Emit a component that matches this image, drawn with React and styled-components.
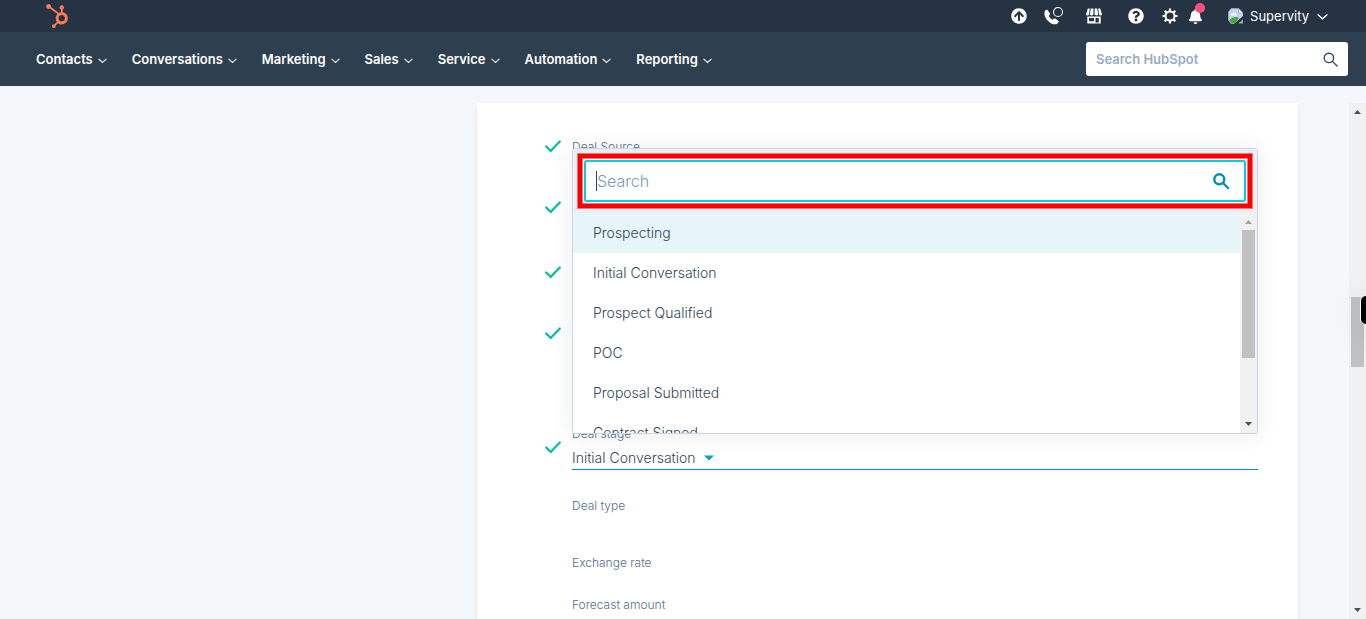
import React from 'react'
import { useState } from 'react'
import styled, { createGlobalStyle } from 'styled-components'
import { FaArrowCircleUp, FaBell, FaHubspot, FaQuestionCircle } from 'react-icons/fa'

const GlobalStyle = createGlobalStyle`
  * {
    box-sizing: border-box;
  }
  body {
    margin: 0;
    background: #f5f8fa;
    color: #33475b;
    font-family: Inter, "Open Sans", sans-serif;
    font-size: 14px;
    font-weight: 300;
  }
  button, input {
    font: inherit;
    color: inherit;
    border: none;
    background: none;
    padding: 0;
  }
  button {
    cursor: pointer;
  }
  svg {
    display: block;
    flex: none;
  }
`;

const Page = styled.div`
  height: 100vh;
  display: flex;
  flex-direction: column;
  overflow: hidden;
`;

const TopBar = styled.header`
  flex: none;
  height: 32px;
  padding: 0 38px 0 45px;
  display: flex;
  align-items: center;
  justify-content: space-between;
  background: #253342;
  color: #fff;
`;

const Logo = styled.a`
  color: #ff7a59;
`;

const Tools = styled.div`
  display: flex;
  align-items: center;
  gap: 9px;
`;

const ToolButton = styled.button`
  position: relative;
  width: 16px;
  height: 32px;
  display: flex;
  align-items: center;
  justify-content: center;
  margin-right: ${(props) => props.$space || 0}px;
`;

const Dot = styled.span`
  position: absolute;
  top: 3px;
  right: -2px;
  width: 10px;
  height: 10px;
  border-radius: 50%;
  background: #ff4f7b;
`;

const Account = styled.button`
  display: flex;
  align-items: center;
  gap: 6px;
  margin-left: 16px;
  font-size: 13px;
  font-weight: 400;
`;

const AccountName = styled.span`
  margin-right: 2px;
`;

const NavBar = styled.div`
  flex: none;
  height: 54px;
  padding: 0 18px 0 36px;
  display: flex;
  align-items: center;
  justify-content: space-between;
  background: #2e3f50;
`;

const Nav = styled.nav`
  display: flex;
  gap: 25px;
`;

const NavItem = styled.button`
  display: flex;
  align-items: center;
  gap: 5px;
  color: #fff;
  font-size: 13px;
  font-weight: 600;
  line-height: 20px;

  svg {
    margin-top: 2px;
  }
`;

const GlobalSearch = styled.form`
  width: 262px;
  height: 34px;
  padding: 0 10px;
  display: flex;
  align-items: center;
  border-radius: 3px;
  background: #fff;
`;

const GlobalInput = styled.input`
  flex: 1;
  min-width: 0;
  outline: none;
  font-size: 13px;
  font-weight: 600;

  &::placeholder {
    color: #99acc2;
    opacity: 1;
  }
`;

const Workspace = styled.main`
  flex: 1;
  min-height: 0;
  padding-top: 17px;
  display: flex;
`;

const Card = styled.section`
  flex: 1;
  min-width: 0;
  margin: 0 51px 0 477px;
  padding: 34px 40px 0 68px;
  background: #fff;
  box-shadow: 0 4px 4px rgba(45, 62, 80, 0.12);
`;

const Row = styled.div`
  height: ${(props) => props.$height}px;
  display: flex;
  align-items: flex-start;
  gap: 11px;
`;

const Status = styled.div`
  flex: none;
  width: 16px;
  height: ${(props) => (props.$tall ? 46 : 18)}px;
  display: flex;
  align-items: center;
`;

const Field = styled.div`
  position: relative;
  flex: 1;
  min-width: 0;
`;

const Label = styled.label`
  display: block;
  color: #516f90;
  font-size: 12px;
  line-height: 20px;
`;

const StageButton = styled.button`
  width: 100%;
  height: 26px;
  padding-top: 2px;
  display: flex;
  align-items: center;
  gap: 8px;
  border-bottom: 1px solid #0091ae;
`;

const Popover = styled.div`
  position: absolute;
  left: 0;
  right: 0;
  bottom: 36px;
  border: 1px solid #cbd6e2;
  border-radius: 3px;
  background: #fff;
  box-shadow: 0 1px 24px rgba(0, 0, 0, 0.08);
  overflow: hidden;
`;

const SearchArea = styled.div`
  position: relative;
  padding: 11px;
  background: #eaf0f6;
`;

const Highlight = styled.div`
  position: absolute;
  inset: 5px;
  border: 4px solid #ff0000;
  box-shadow: 0 0 0 1px #f77376, inset 0 0 0 1px #f77376;
  pointer-events: none;
`;

const SearchBox = styled.div`
  height: 42px;
  padding: 0 15px 0 10px;
  display: flex;
  align-items: center;
  border: 2px solid #00d0e4;
  border-radius: 3px;
  background: #fff;
  color: #0091ae;
`;

const Caret = styled.span`
  width: 1px;
  height: 20px;
  background: #33475b;
`;

const SearchInput = styled.input`
  flex: 1;
  min-width: 0;
  outline: none;
  color: #33475b;
  caret-color: transparent;
  font-size: 16px;

  &::placeholder {
    color: #7c98b6;
    opacity: 1;
  }
`;

const Results = styled.div`
  height: 220px;
  display: flex;
`;

const Options = styled.ul`
  flex: 1;
  margin: 0;
  padding: 0;
  list-style: none;
  overflow: hidden;
`;

const Option = styled.button`
  width: 100%;
  height: 40px;
  padding: 0 20px 2px;
  text-align: left;
  background: ${(props) => (props.$active ? '#e5f5f8' : '#fff')};
`;

const Track = styled.div`
  flex: none;
  width: 17px;
  padding: 6px 2px;
  display: flex;
  flex-direction: column;
  align-items: center;
  background: #f1f1f1;
`;

const Spacer = styled.div`
  flex: ${(props) => props.$grow} 0 0;
`;

const TopGap = styled.div`
  flex: none;
  height: 5px;
`;

const Thumb = styled.div`
  width: 13px;
  height: ${(props) => props.$height}px;
  background: #c1c1c1;
`;

const SideTab = styled.button`
  position: fixed;
  right: -20px;
  top: 295px;
  width: 26px;
  height: 30px;
  border: 1px solid #fff;
  border-radius: 6px;
  background: #000;
  box-shadow: 0 4px 40px rgba(0, 0, 0, 0.1);
`;

const menus = ['Contacts', 'Conversations', 'Marketing', 'Sales', 'Service', 'Automation', 'Reporting'];

const stages = [
    'Prospecting',
    'Initial Conversation',
    'Prospect Qualified',
    'POC',
    'Proposal Submitted',
    'Contract Signed',
];

const Chevron = ({ size = 9, weight = 1 }) => (
    <svg width={size} height={size} viewBox="0 0 8 8" fill="none" stroke="currentColor" strokeWidth={weight}>
        <path d="M0.5 2.500l3.500 3.200L7.500 2.500" />
    </svg>
)

const Check = () => (
    <svg width="16" height="14" viewBox="0 0 16 14" fill="none" stroke="#00bda5" strokeWidth="2.2">
        <path d="M1.200 7.500l4.500 4.500L14.800 2.500" strokeLinecap="round" />
    </svg>
)

const Magnifier = ({ weight, size }) => (
    <svg width={size} height={size} viewBox="0 0 16 16" fill="none" stroke="currentColor" strokeWidth={weight}>
        <circle cx="6.3" cy="6.3" r="5" />
        <path d="M10 10l5 5" strokeLinecap="round" />
    </svg>
)

const Phone = () => (
    <svg width="20" height="18" viewBox="0 0 20 18">
        <path
            d="M.8 4.200C1.400 3.200 2.600 2.500 3.500 3l2.300 3.300c.4.9 0 1.700-1.100 2.500.8 1.900 2 3.100 3.900 3.900.9-1.100 1.700-1.500 2.600-1.100l3.300 2.300c.6 1-.2 2.100-1.300 2.900C7.700 19.600-1.700 10.400.8 4.200z"
            fill="#fff"
        />
        <circle cx="14" cy="5" r="4.500" fill="none" stroke="#fff" strokeWidth="1.100" />
    </svg>
)

const Store = () => (
    <svg width="16" height="16" viewBox="0 0 16 16">
        <path d="M1.800.500h2L3 6.500C2.600 7.700.4 7.700 0 6.500zM4.800.500h2.600v6c-.5 1.200-3.200 1.200-3.600 0zM8.600.500h2.600l1 6c-.4 1.200-3.100 1.200-3.600 0zM12.200.500h2l1.800 6c-.4 1.200-2.500 1.200-3 0z" fill="#fff" />
        <path fillRule="evenodd" d="M1.300 8.500h13.400V15.500H1.300zM3 10v3.300h5V10zM9.500 10v4.500h3.300V10z" fill="#fff" />
    </svg>
)

const Gear = () => (
    <svg width="16" height="16" viewBox="0 0 16 16" fill="none" stroke="#fff">
        <circle cx="8" cy="8" r="4.500" strokeWidth="2" />
        {[0, 45, 90, 135, 180, 225, 270, 315].map((angle) => (
            <path key={angle} d="M8 .500v2.500" strokeWidth="2.200" transform={`rotate(${angle} 8 8)`} />
        ))}
    </svg>
)

const BrokenImage = () => (
    <svg width="16" height="16" viewBox="0 0 16 16">
        <path d="M3 .500h8l4 4v6l-7 5H3L.500 12V4z" fill="#c3d5f7" />
        <path d="M3 7.500c0-2 2-2 2.500-2C7 3.500 9 5.500 8.500 7.500z" fill="#fff" />
        <path d="M1 13c2-4 7-5 10-3l-4 5.500H3z" fill="#4ba83b" />
        <path d="M16 7L6 16h4l6-5z" fill="#253342" />
        <path d="M15 11.500v4h-5z" fill="#8fb086" />
        <path d="M10.500.500L15 5h-4.500z" fill="#fff" stroke="#8a8a8a" strokeWidth=".6" />
        <path d="M10.500.500H3.500L.500 4v8l2.500 3.500H6" fill="none" stroke="#a3a9b2" strokeWidth=".8" />
    </svg>
)

const Arrow = ({ up, muted }) => (
    <svg width="7" height="6" viewBox="0 0 7 6">
        <path d={up ? 'M0 5l3.500-4L7 5z' : 'M0 1l3.500 4L7 1z'} fill={muted ? '#a3a3a3' : '#505050'} />
    </svg>
)

const ScrollBar = ({ thumb, before, after, atTop }) => (
    <Track>
        <Arrow up muted={atTop} />
        {atTop ? <TopGap /> : <Spacer $grow={before} />}
        <Thumb $height={thumb} />
        <Spacer $grow={after} />
        <Arrow />
    </Track>
)

const App = () => {
    const [query, setQuery] = useState('');
    const [active, setActive] = useState('Prospecting');

    const shown = stages.filter((stage) => stage.toLowerCase().includes(query.toLowerCase()))

    return <Page>
        <GlobalStyle />
        <TopBar>
            <Logo href="#" aria-label="Home"><FaHubspot size={24} /></Logo>
            <Tools>
                <ToolButton $space={10} aria-label="Upgrade"><FaArrowCircleUp size={16} /></ToolButton>
                <ToolButton $space={15} aria-label="Calling"><Phone /></ToolButton>
                <ToolButton $space={17} aria-label="Marketplace"><Store /></ToolButton>
                <ToolButton $space={9} aria-label="Help"><FaQuestionCircle size={16} /></ToolButton>
                <ToolButton aria-label="Settings"><Gear /></ToolButton>
                <ToolButton aria-label="Notifications"><FaBell size={15} /><Dot /></ToolButton>
                <Account>
                    <BrokenImage />
                    <AccountName>Supervity</AccountName>
                    <Chevron size={11} />
                </Account>
            </Tools>
        </TopBar>
        <NavBar>
            <Nav>
                {menus.map((menu) => (
                    <NavItem key={menu}>{menu}<Chevron /></NavItem>
                ))}
            </Nav>
            <GlobalSearch>
                <GlobalInput placeholder="Search HubSpot" aria-label="Search HubSpot" />
                <Magnifier size={15} weight={1.5} />
            </GlobalSearch>
        </NavBar>
        <Workspace>
            <Card>
                <Row $height={61}>
                    <Status><Check /></Status>
                    <Field><Label as="div">Deal Source</Label></Field>
                </Row>
                <Row $height={65}><Status><Check /></Status></Row>
                <Row $height={61}><Status><Check /></Status></Row>
                <Row $height={100}><Status><Check /></Status></Row>
                <Row $height={72}>
                    <Status $tall><Check /></Status>
                    <Field>
                        <Label htmlFor="deal-stage">Deal stage</Label>
                        <StageButton id="deal-stage">
                            Initial Conversation
                            <svg width="10" height="6" viewBox="0 0 10 6"><path d="M0 0.500h10L5 5.500z" fill="#00a4bd" /></svg>
                        </StageButton>
                        <Popover>
                            <SearchArea>
                                <SearchBox>
                                    <Caret />
                                    <SearchInput
                                        value={query}
                                        onChange={(e) => setQuery(e.target.value)}
                                        placeholder="Search"
                                        aria-label="Search stages"
                                    />
                                    <Magnifier size={16} weight={2.4} />
                                </SearchBox>
                                <Highlight />
                            </SearchArea>
                            <Results>
                                <Options>
                                    {shown.map((stage) => (
                                        <li key={stage}>
                                            <Option $active={stage === active} onClick={() => setActive(stage)}>{stage}</Option>
                                        </li>
                                    ))}
                                </Options>
                                <ScrollBar atTop thumb={128} after={1} />
                            </Results>
                        </Popover>
                    </Field>
                </Row>
                <Row $height={57}><Status /><Field><Label as="div">Deal type</Label></Field></Row>
                <Row $height={42}><Status /><Field><Label as="div">Exchange rate</Label></Field></Row>
                <Row $height={20}><Status /><Field><Label as="div">Forecast amount</Label></Field></Row>
            </Card>
            <ScrollBar thumb={70} before={182} after={240} />
        </Workspace>
        <SideTab aria-label="Open side panel" />
    </Page>;
};

export default App
